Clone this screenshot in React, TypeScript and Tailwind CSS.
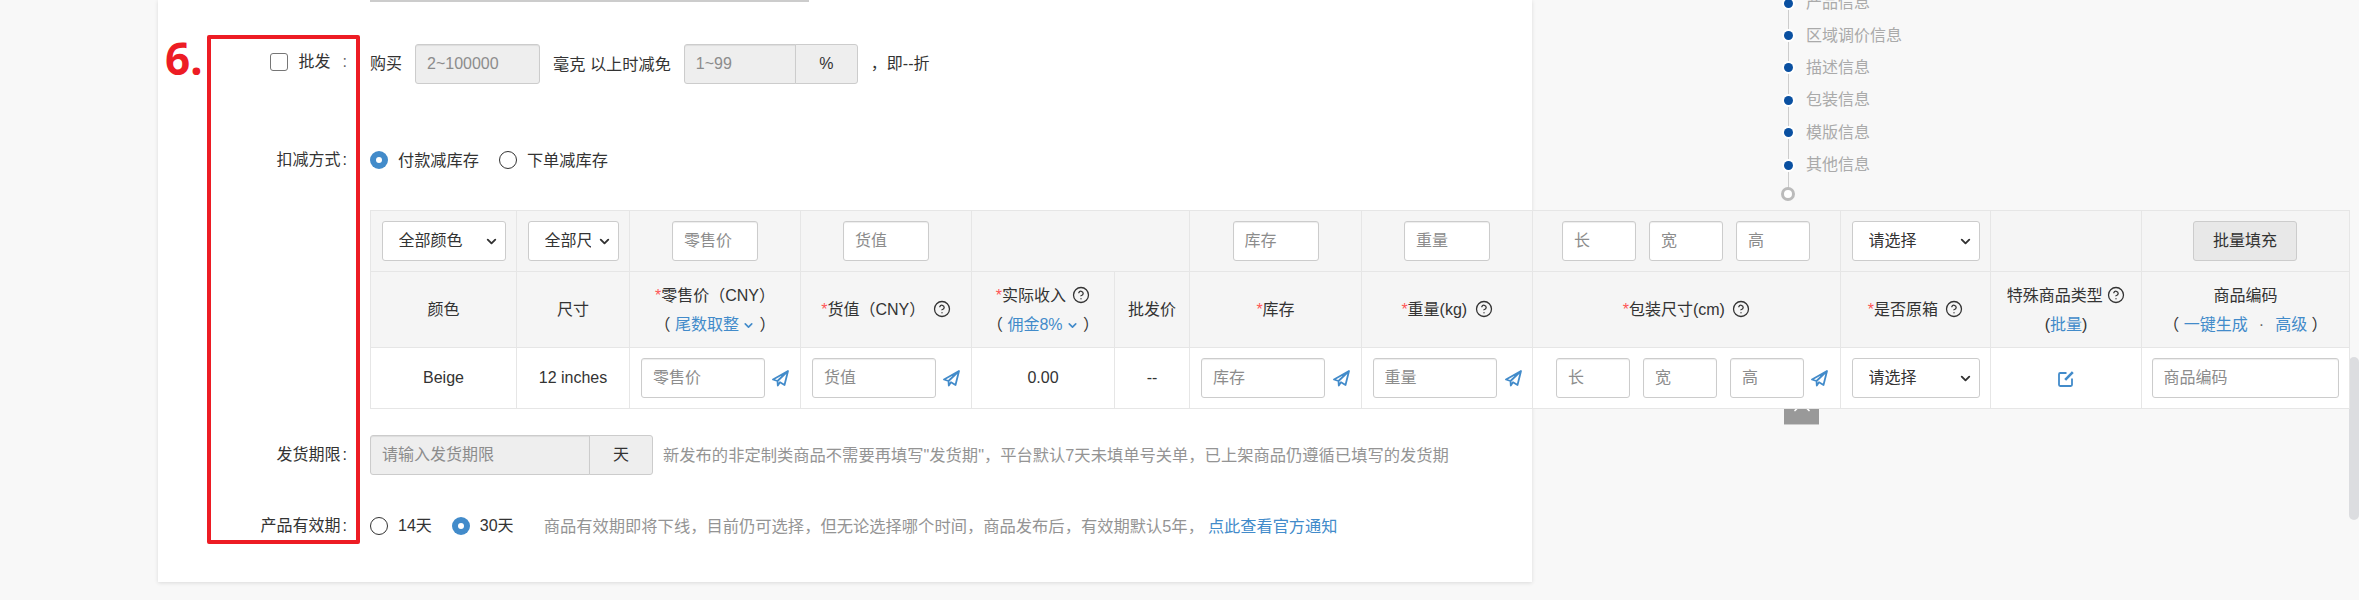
import { ChevronDown, ChevronUp, CircleHelp } from "lucide-react"

const FONT = "font-['Liberation_Sans','Noto_Sans_CJK_SC',sans-serif]"

function Plane(){
  return (
    <svg viewBox="0 0 17 17" className="w-[17px] h-[17px] shrink-0 text-[#428bca]" fill="none" stroke="currentColor" strokeWidth="1.8" strokeLinejoin="round">
      <path d="M16 1 L1 9.5 L5.5 11 L16 1 L12.5 15 L8 12.3 L5.8 15.5 L5.5 11"/>
    </svg>
  )
}

function Help(){
  return <CircleHelp size={18} strokeWidth={1.7} className="inline align-[-3px] text-[#333]"/>
}

function Req(){
  return <span className="text-[#f55]">*</span>
}

function Input({ ph, w, disabled }:{ ph: string, w: string, disabled?: boolean }){
  return (
    <input readOnly placeholder={ph} className={`${w} h-10 px-[11px] rounded-[3px] border border-[#ccc] text-[16px] shadow-[inset_0_1px_1px_rgba(0,0,0,0.075)] placeholder:text-[#8c8c8c] ${disabled ? "bg-[#eee]" : "bg-white"}`}/>
  )
}

function Select({ text, w, tw }:{ text: string, w: string, tw?: string }){
  return (
    <div className={`${w} h-10 pl-4 pr-[6px] flex items-center justify-between overflow-hidden rounded-[3px] border border-[#ccc] bg-white text-[16px] text-[#333]`}>
      <span className={`${tw ?? ""} overflow-hidden whitespace-nowrap`}>{text}</span>
      <ChevronDown size={15} strokeWidth={3} className="shrink-0"/>
    </div>
  )
}

function Radio({ checked }:{ checked?: boolean }){
  return checked ? (
    <span className="w-[18px] h-[18px] rounded-full bg-[#428bca] flex items-center justify-center shrink-0">
      <span className="w-[6px] h-[6px] rounded-full bg-white"/>
    </span>
  ) : (
    <span className="w-[18px] h-[18px] rounded-full border border-[#333] bg-white shrink-0"/>
  )
}

function Label({ children }:{ children: React.ReactNode }){
  return <div className="w-[189px] mr-[23px] shrink-0 text-right text-[16px] text-[#333] whitespace-nowrap">{children}</div>
}

const th = "border border-[#e6e6e6] bg-[#f5f5f5] text-center font-normal text-[16px] text-[#333] p-0 whitespace-nowrap"
const td = "border border-[#e6e6e6] bg-white text-center text-[16px] text-[#333] p-0 whitespace-nowrap"

function SkuTable(){
  return (
    <table className="table-fixed border-collapse w-[1979px]">
      <colgroup>
        <col className="w-[146px]"/>
        <col className="w-[113px]"/>
        <col className="w-[171px]"/>
        <col className="w-[171px]"/>
        <col className="w-[143px]"/>
        <col className="w-[75px]"/>
        <col className="w-[172px]"/>
        <col className="w-[171px]"/>
        <col className="w-[308px]"/>
        <col className="w-[150px]"/>
        <col className="w-[151px]"/>
        <col className="w-[208px]"/>
      </colgroup>
      <tbody>
        <tr className="h-[61px]">
          <td className={th}><div className="flex justify-center"><Select text="全部颜色" w="w-[124px]"/></div></td>
          <td className={th}><div className="flex justify-center"><Select text="全部尺寸" w="w-[91px]" tw="w-[46px]"/></div></td>
          <td className={th}><Input ph="零售价" w="w-[86px]"/></td>
          <td className={th}><Input ph="货值" w="w-[86px]"/></td>
          <td className={th} colSpan={2}></td>
          <td className={th}><Input ph="库存" w="w-[86px]"/></td>
          <td className={th}><Input ph="重量" w="w-[86px]"/></td>
          <td className={th}>
            <div className="flex justify-center gap-[13px] pr-[1px]">
              <Input ph="长" w="w-[74px]"/>
              <Input ph="宽" w="w-[74px]"/>
              <Input ph="高" w="w-[74px]"/>
            </div>
          </td>
          <td className={th}><div className="flex justify-center"><Select text="请选择" w="w-[128px]"/></div></td>
          <td className={th}></td>
          <td className={th}>
            <button className="w-[104px] h-10 mr-[1px] rounded-[3px] border border-[#ccc] bg-[#e8e8e8] text-[16px] text-[#333]">批量填充</button>
          </td>
        </tr>
        <tr className="h-[76px]">
          <td className={th}>颜色</td>
          <td className={th}>尺寸</td>
          <td className={th}>
            <div className="leading-[29px]"><Req/>零售价（CNY）</div>
            <div className="leading-[29px]">（ <a className="text-[#428bca]">尾数取整<ChevronDown size={13} strokeWidth={3} className="inline ml-[3px]"/></a> ）</div>
          </td>
          <td className={th}><Req/>货值（CNY） <span className="ml-[3px]"><Help/></span></td>
          <td className={th}>
            <div className="leading-[29px]"><Req/>实际收入 <span className="ml-[2px]"><Help/></span></div>
            <div className="leading-[29px]">（ <a className="text-[#428bca]">佣金8%<ChevronDown size={13} strokeWidth={3} className="inline ml-[3px]"/></a> ）</div>
          </td>
          <td className={th}>批发价</td>
          <td className={th}><Req/>库存</td>
          <td className={th}><Req/>重量(kg) <span className="ml-[3px]"><Help/></span></td>
          <td className={th}><Req/>包装尺寸(cm) <span className="ml-[3px]"><Help/></span></td>
          <td className={th}><Req/>是否原箱 <span className="ml-[3px]"><Help/></span></td>
          <td className={th}>
            <div className="leading-[29px]">特殊商品类型 <Help/></div>
            <div className="leading-[29px]">(<a className="text-[#428bca]">批量</a>)</div>
          </td>
          <td className={th}>
            <div className="leading-[29px]">商品编码</div>
            <div className="leading-[29px]">（ <a className="text-[#428bca]">一键生成</a><span className="mx-[11px] text-[#666]">·</span><a className="text-[#428bca]">高级</a> ）</div>
          </td>
        </tr>
        <tr className="h-[61px]">
          <td className={td}>Beige</td>
          <td className={td}>12 inches</td>
          <td className={td}><div className="flex items-center justify-center gap-[7px]"><Input ph="零售价" w="w-[124px]"/><Plane/></div></td>
          <td className={td}><div className="flex items-center justify-center gap-[7px]"><Input ph="货值" w="w-[124px]"/><Plane/></div></td>
          <td className={td} >0.00</td>
          <td className={td}>--</td>
          <td className={td}><div className="flex items-center justify-center gap-[8px]"><Input ph="库存" w="w-[124px]"/><Plane/></div></td>
          <td className={td}><div className="flex items-center justify-center gap-[8px]"><Input ph="重量" w="w-[124px]"/><Plane/></div></td>
          <td className={td}>
            <div className="flex items-center pl-[23px] gap-[13px]">
              <Input ph="长" w="w-[74px]"/>
              <Input ph="宽" w="w-[74px]"/>
              <div className="flex items-center gap-[7px]"><Input ph="高" w="w-[74px]"/><Plane/></div>
            </div>
          </td>
          <td className={td}><div className="flex justify-center"><Select text="请选择" w="w-[128px]"/></div></td>
          <td className={td}>
            <svg viewBox="0 0 16 16" className="w-4 h-4 inline text-[#428bca]" fill="none" stroke="currentColor" strokeWidth="1.8" strokeLinejoin="round">
              <path d="M8.5 2 H2.2 Q1 2 1 3.2 V13.8 Q1 15 2.2 15 H12.8 Q14 15 14 13.8 V7.5"/>
              <path d="M14.8 1.2 L7.2 8.8" strokeWidth="2.6"/>
            </svg>
          </td>
          <td className={td}><div className="flex justify-center pr-[1px]"><Input ph="商品编码" w="w-[187px]"/></div></td>
        </tr>
      </tbody>
    </table>
  )
}

function Nav(){
  const items = ["产品信息","区域调价信息","描述信息","包装信息","模版信息","其他信息"]
  return (
    <div className="relative ml-[252px] mt-[-13px] flex flex-col">
      <div className="absolute left-[4px] top-[16px] w-px h-[190px] bg-[#ccc]"/>
      {items.map(t => (
        <div key={t} className="relative h-[32.4px] flex items-center gap-[13px] text-[16px] text-[#aaa] whitespace-nowrap">
          <span className="w-[9px] h-[9px] rounded-full bg-[#0a50a1] ring-2 ring-white"/>
          {t}
        </div>
      ))}
      <span className="relative -ml-[3px] mt-[6px] w-[14px] h-[14px] rounded-full border-[3px] border-[#bbb] bg-white"/>
    </div>
  )
}

export default function App(){
  return (
    <div className={`${FONT} relative w-[2359px] h-[600px] overflow-hidden bg-[#f8f8f8] flex items-start pl-[158px]`}>
      <div className="relative z-10 w-[1374px] h-[582px] shrink-0 bg-white pl-[212px] shadow-[0_1px_4px_rgba(0,0,0,0.12)]">
        <div className="w-[439px] h-[2px] bg-[#ccc]"/>

        <div className="mt-[42px] h-10 flex items-center -ml-[212px]">
          <Label>
            <span className="inline-flex items-center">
              <span className="w-[18px] h-[18px] rounded-[3px] border border-[#767676] bg-white mr-[11px]"/>
              批发<span className="ml-[12px] text-[#666]">:</span>
            </span>
          </Label>
          <div className="flex items-center text-[16px] text-[#333] whitespace-nowrap">
            <span className="mr-[13px]">购买</span>
            <Input ph="2~100000" w="w-[125px]" disabled/>
            <span className="mx-[13px] text-[16.2px]">毫克 以上时减免</span>
            <Input ph="1~99" w="w-[112px] rounded-r-none" disabled/>
            <span className="w-[63px] h-10 -ml-px flex items-center justify-center rounded-r-[3px] border border-[#ccc] bg-[#eee]">%</span>
            <span className="ml-[13px]">，即--折</span>
          </div>
        </div>

        <div className="mt-[56px] h-10 flex items-center -ml-[212px]">
          <Label>扣减方式<span className="ml-[2px]">:</span></Label>
          <div className="flex items-center text-[16px] text-[#333] whitespace-nowrap">
            <Radio checked/><span className="ml-[10px] mr-[20px] text-[16.2px]">付款减库存</span>
            <Radio/><span className="ml-[10px] text-[16.2px]">下单减库存</span>
          </div>
        </div>

        <div className="mt-[30px]"><SkuTable/></div>

        <div className="mt-[26px] h-10 flex items-center -ml-[212px]">
          <Label>发货期限<span className="ml-[2px]">:</span></Label>
          <Input ph="请输入发货期限" w="w-[220px] rounded-r-none" disabled/>
          <span className="w-[64px] h-10 -ml-px flex items-center justify-center rounded-r-[3px] border border-[#ccc] bg-[#eee] text-[16px] text-[#333]">天</span>
          <span className="ml-[10px] text-[16.3px] text-[#949494] whitespace-nowrap">新发布的非定制类商品不需要再填写"发货期"，平台默认7天未填单号关单，已上架商品仍遵循已填写的发货期</span>
        </div>

        <div className="mt-[31px] h-10 flex items-center -ml-[212px]">
          <Label>产品有效期<span className="ml-[2px]">:</span></Label>
          <div className="flex items-center text-[16px] text-[#333] whitespace-nowrap">
            <Radio/><span className="ml-[10px] mr-[20px]">14天</span>
            <Radio checked/><span className="ml-[10px]">30天</span>
            <span className="ml-[30px] text-[16.3px] text-[#949494]">商品有效期即将下线，目前仍可选择，但无论选择哪个时间，商品发布后，有效期默认5年，</span>
            <a className="ml-[4px] text-[16.2px] text-[#428bca]">点此查看官方通知</a>
          </div>
        </div>

        <div className="absolute left-[49px] top-[35px] w-[153px] h-[509px] border-4 rounded-[2px] border-[#ed1c24]"/>
        <div className="absolute left-[7px] top-[32px] font-['Noto_Sans',sans-serif] text-[44px] leading-[52px] font-bold text-[#ed1c24]">6.</div>
      </div>

      <Nav/>

      <div className="absolute left-[1784px] top-[390px] w-[35px] h-[35px] flex items-center justify-center bg-[#999] border-b border-[#ccc] text-white">
        <ChevronUp size={28} strokeWidth={1.5}/>
      </div>
      <div className="absolute right-0 top-[357px] w-[10px] h-[163px] rounded-[5px] bg-[#dcdde0]"/>
    </div>
  )
}
